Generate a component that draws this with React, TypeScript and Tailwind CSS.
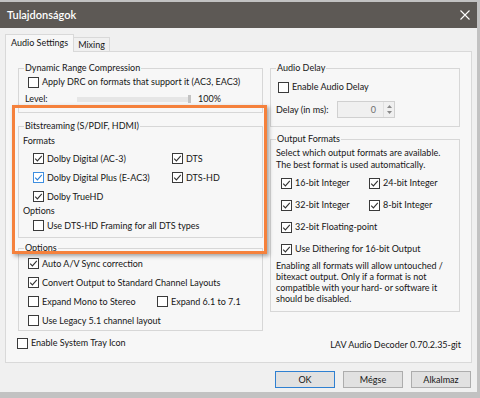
import React from 'react';

const TXT = 'text-[9px] leading-[12px]';

function CheckMark({ blue }: { blue?: boolean }) {
  return (
    <svg width="9" height="9" viewBox="0 0 9 9" className="block">
      <polyline
        points="1.2,4.6 3.4,6.9 7.8,1.8"
        fill="none"
        stroke={blue ? '#2b7fd6' : '#333333'}
        strokeWidth="1.1"
      />
    </svg>
  );
}

function Check({ label, checked, blue, className = '' }: { label: string; checked?: boolean; blue?: boolean; className?: string }) {
  return (
    <div className={`flex items-center ${className}`}>
      <span
        className={`flex h-[11px] w-[11px] shrink-0 items-center justify-center border bg-white ${
          blue ? 'border-[#3d8ee0]' : 'border-[#3a3a3a]'
        }`}
      >
        {checked && <CheckMark blue={blue} />}
      </span>
      <span className={`ml-[3px] whitespace-nowrap ${TXT}`}>{label}</span>
    </div>
  );
}

function Group({ title, className = '', children }: { title: string; className?: string; children: React.ReactNode }) {
  return (
    <fieldset className={`m-0 border border-[#d7d7d7] p-0 ${className}`}>
      <legend className={`ml-[5px] px-[1px] ${TXT}`}>{title}</legend>
      {children}
    </fieldset>
  );
}

function Button({ label, isDefault }: { label: string; isDefault?: boolean }) {
  return (
    <button
      type="button"
      className={`flex h-[17px] w-[60px] items-center justify-center border bg-[#e1e1e1] ${TXT} ${
        isDefault ? 'border-[#2f80d1]' : 'border-[#adadad]'
      }`}
    >
      {label}
    </button>
  );
}

export default function App() {
  return (
    <div className="relative h-[398px] w-[480px] overflow-hidden bg-[#c2c2c2] pt-[2px] font-[family-name:Lato,sans-serif] text-[#161616]">
      <div className="flex h-[390px] w-[477px] flex-col bg-[#f0f0f0]">
        {/* title bar */}
        <div className="flex h-[26px] shrink-0 items-center justify-between bg-[#5d5955] pl-[7px] pr-[7px]">
          <span className="text-[11px] font-semibold leading-[14px] text-white">Tulajdonságok</span>
          <svg width="10" height="10" viewBox="0 0 10 10">
            <path d="M0.5 0.5 L9.5 9.5 M9.5 0.5 L0.5 9.5" stroke="#ffffff" strokeWidth="1.1" />
          </svg>
        </div>

        {/* tabs */}
        <div className="flex h-[23px] shrink-0 items-end pl-[5px]">
          <div className={`relative z-10 -mb-[1px] flex h-[18px] items-start border border-b-0 border-[#d9d9d9] bg-[#f7f7f7] px-[5px] pt-[2px] ${TXT}`}>
            Audio Settings
          </div>
          <div className={`flex h-[14px] items-start border border-b-0 border-l-0 border-[#d9d9d9] bg-[#f0f0f0] px-[4px] pt-[1px] ${TXT}`}>
            Mixing
          </div>
        </div>

        {/* tab panel */}
        <div className="ml-[5px] flex h-[312px] w-[467px] flex-col border border-[#d9d9d9] bg-[#f7f7f7] pl-[12px] pr-[10px]">
          <div className="flex gap-[7px]">
            {/* left column */}
            <div className="flex w-[245px] flex-col">
              <Group title="Dynamic Range Compression" className="mt-[10px] pb-[4px]">
                <Check label="Apply DRC on formats that support it (AC3, EAC3)" className="h-[16px] pl-[9px]" />
                <div className="flex h-[18px] items-center pl-[6px]">
                  <span className={`w-[52px] ${TXT}`}>Level:</span>
                  <div className="relative flex h-[8px] w-[114px] items-center">
                    <div className="h-[5px] w-full bg-[#e6e6e6]" />
                    <div className="absolute right-0 top-0 h-[8px] w-[3px] bg-[#c3c3c3]" />
                  </div>
                  <span className={`ml-[7px] ${TXT}`}>100%</span>
                </div>
              </Group>

              <Group title="Bitstreaming (S/PDIF, HDMI)" className="mt-[7px] pb-[2px]">
                <div className={`mt-[3px] pl-[4px] ${TXT}`}>Formats</div>
                <div className="mt-[2px] grid grid-cols-[139px_1fr] pl-[14px]">
                  <Check label="Dolby Digital (AC-3)" checked className="h-[19px]" />
                  <Check label="DTS" checked className="h-[19px]" />
                  <Check label="Dolby Digital Plus (E-AC3)" checked blue className="h-[19px]" />
                  <Check label="DTS-HD" checked className="h-[19px]" />
                  <Check label="Dolby TrueHD" checked className="h-[19px]" />
                </div>
                <div className="flex h-[10px] items-center pl-[4px]">
                  <span className={TXT}>Options</span>
                </div>
                <Check label="Use DTS-HD Framing for all DTS types" className="h-[19px] pl-[14px]" />
              </Group>

              <Group title="Options" className="mt-[4px]">
                <div className="grid grid-cols-[129px_1fr] pl-[9px]">
                  <Check label="Auto A/V Sync correction" checked className="col-span-2 h-[19px]" />
                  <Check label="Convert Output to Standard Channel Layouts" checked className="col-span-2 h-[19px]" />
                  <Check label="Expand Mono to Stereo" className="h-[19px]" />
                  <Check label="Expand 6.1 to 7.1" className="h-[19px]" />
                  <Check label="Use Legacy 5.1 channel layout" className="col-span-2 h-[19px]" />
                </div>
              </Group>
            </div>

            {/* right column */}
            <div className="flex w-[190px] flex-col">
              <Group title="Audio Delay" className="mt-[10px] pb-[8px]">
                <Check label="Enable Audio Delay" className="mt-[4px] h-[18px] pl-[7px]" />
                <div className="mt-[5px] flex h-[17px] items-center pl-[5px]">
                  <span className={`w-[61px] ${TXT}`}>Delay (in ms):</span>
                  <div className="flex h-[17px] w-[58px] border border-[#d0d0d0] bg-[#f0f0f0]">
                    <span className={`flex-1 pr-[7px] text-right text-[#6e6e6e] ${TXT} leading-[15px]`}>0</span>
                    <div className="flex w-[11px] flex-col items-center justify-center gap-[3px] border-l border-[#e0e0e0]">
                      <svg width="5" height="3" viewBox="0 0 5 3">
                        <path d="M0 3 L2.5 0 L5 3 Z" fill="#8a8a8a" />
                      </svg>
                      <svg width="5" height="3" viewBox="0 0 5 3">
                        <path d="M0 0 L2.5 3 L5 0 Z" fill="#8a8a8a" />
                      </svg>
                    </div>
                  </div>
                </div>
              </Group>

              <Group title="Output Formats" className="mt-[6px] pb-[7px]">
                <div className={`mt-[2px] pl-[5px] ${TXT}`}>
                  Select which output formats are available.
                  <br />
                  The best format is used automatically.
                </div>
                <div className="mt-[1px] grid grid-cols-[88px_1fr] pl-[10px]">
                  <Check label="16-bit Integer" checked className="h-[22px]" />
                  <Check label="24-bit Integer" checked className="h-[22px]" />
                  <Check label="32-bit Integer" checked className="h-[22px]" />
                  <Check label="8-bit Integer" checked className="h-[22px]" />
                  <Check label="32-bit Floating-point" checked className="col-span-2 h-[22px]" />
                  <Check label="Use Dithering for  16-bit Output" checked className="col-span-2 h-[22px]" />
                </div>
                <div className="pl-[5px] text-[9px] leading-[11px]">
                  Enabling all formats will allow untouched /
                  <br />
                  bitexact output. Only if a format is not
                  <br />
                  compatible with your hard- or software it
                  <br />
                  should be disabled.
                </div>
              </Group>
            </div>
          </div>

          <div className="mt-[4px] flex h-[16px] items-center justify-between -ml-[1px]">
            <Check label="Enable System Tray Icon" />
            <span className={`mt-[4px] ${TXT}`}>LAV Audio Decoder 0.70.2.35-git</span>
          </div>
        </div>

        {/* buttons */}
        <div className="mt-[8px] flex justify-end gap-[8px] pr-[6px]">
          <Button label="OK" isDefault />
          <Button label="Mégse" />
          <Button label="Alkalmaz" />
        </div>
      </div>

      {/* orange highlight overlay */}
      <div className="pointer-events-none absolute left-[12px] top-[105px] h-[149px] w-[255px] border-[3px] border-[#f5813c] shadow-[2px_2px_4px_rgba(0,0,0,0.35)]" />
    </div>
  );
}
